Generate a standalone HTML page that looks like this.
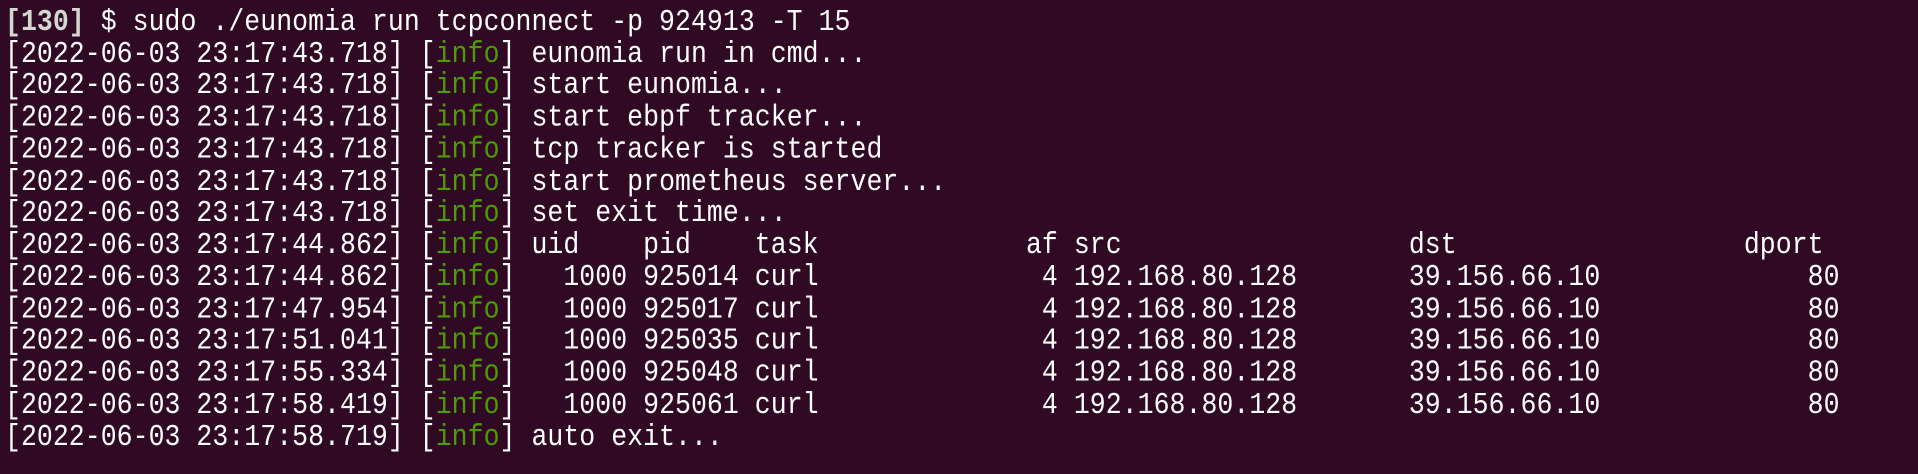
<!DOCTYPE html>
<html><head><meta charset="utf-8"><style>
html,body{margin:0;padding:0;background:#300a24;width:1918px;height:474px;overflow:hidden}
pre{margin:0;position:absolute;left:5px;top:0;padding-top:6px;font-family:"Liberation Mono","DejaVu Sans Mono",monospace;font-size:26.5px;letter-spacing:0.05px;line-height:27.74px;color:#ffffff;transform:scaleY(1.15);transform-origin:0 0;white-space:pre}
.g{color:#4e9a06}
.b{color:#d3d7cf;font-weight:bold}
</style></head><body>
<pre><span class="b">[130]</span> $ sudo ./eunomia run tcpconnect -p 924913 -T 15
[2022-06-03 23:17:43.718] [<span class="g">info</span>] eunomia run in cmd...
[2022-06-03 23:17:43.718] [<span class="g">info</span>] start eunomia...
[2022-06-03 23:17:43.718] [<span class="g">info</span>] start ebpf tracker...
[2022-06-03 23:17:43.718] [<span class="g">info</span>] tcp tracker is started
[2022-06-03 23:17:43.718] [<span class="g">info</span>] start prometheus server...
[2022-06-03 23:17:43.718] [<span class="g">info</span>] set exit time...
[2022-06-03 23:17:44.862] [<span class="g">info</span>] uid    pid    task             af src                  dst                  dport
[2022-06-03 23:17:44.862] [<span class="g">info</span>]   1000 925014 curl              4 192.168.80.128       39.156.66.10             80
[2022-06-03 23:17:47.954] [<span class="g">info</span>]   1000 925017 curl              4 192.168.80.128       39.156.66.10             80
[2022-06-03 23:17:51.041] [<span class="g">info</span>]   1000 925035 curl              4 192.168.80.128       39.156.66.10             80
[2022-06-03 23:17:55.334] [<span class="g">info</span>]   1000 925048 curl              4 192.168.80.128       39.156.66.10             80
[2022-06-03 23:17:58.419] [<span class="g">info</span>]   1000 925061 curl              4 192.168.80.128       39.156.66.10             80
[2022-06-03 23:17:58.719] [<span class="g">info</span>] auto exit...</pre>
</body></html>
